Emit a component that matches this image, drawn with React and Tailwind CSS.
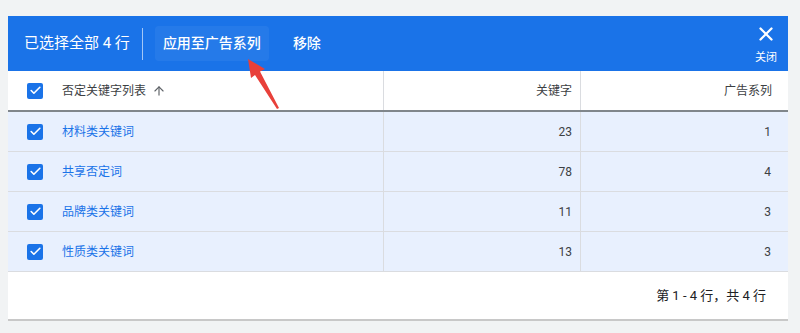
import { Check, X, ArrowUp } from "lucide-react";

const rows = [
  { name: "材料类关键词", keywords: 23, campaigns: 1 },
  { name: "共享否定词", keywords: 78, campaigns: 4 },
  { name: "品牌类关键词", keywords: 11, campaigns: 3 },
  { name: "性质类关键词", keywords: 13, campaigns: 3 },
];

const font = { fontFamily: 'Roboto, "Noto Sans CJK SC", sans-serif' };

function Box() {
  return (
    <div className="w-4 h-4 rounded-[2px] bg-[#1a73e8] flex items-center justify-center">
      <Check size={13} strokeWidth={3} className="text-white" />
    </div>
  );
}

export default function App() {
  return (
    <div className="w-[800px] h-[333px] bg-[#f1f3f4] pt-4 pl-2 relative" style={font}>
      <div className="w-[780px] bg-white shadow-[0_2px_0_#c8c8c8]">
        {/* selection bar */}
        <div className="h-[55px] bg-[#1a73e8] flex items-center pl-4 text-white">
          <span className="text-[15px]">已选择全部 4 行</span>
          <div className="w-px h-8 bg-white/60 ml-3 mr-3" />
          <div className="h-[35px] px-2 rounded bg-white/5 flex items-center text-[14px] font-medium">应用至广告系列</div>
          <div className="ml-[24px] text-[14px] font-medium">移除</div>
          <div className="ml-auto mr-[11px] flex flex-col items-center pt-[2px]">
            <X size={22} strokeWidth={2.5} />
            <span className="text-[11px] mt-[5px]">关闭</span>
          </div>
        </div>

        {/* header */}
        <div className="flex h-[41px] border-b-2 border-[#80868b] text-[12px] text-[#3c4043]">
          <div className="w-[376px] flex items-center pl-[19px] border-r border-[#dadce0]">
            <Box />
            <span className="ml-[19px]">否定关键字列表</span>
            <ArrowUp size={14} className="ml-[6px] text-[#5f6368]" />
          </div>
          <div className="w-[197px] flex items-center justify-end pr-2 border-r border-[#dadce0]">关键字</div>
          <div className="flex-1 flex items-center justify-end pr-4">广告系列</div>
        </div>

        {rows.map((r) => (
          <div key={r.name} className="flex h-10 bg-[#e8f0fe] border-b border-[#dadce0] text-[12px]">
            <div className="w-[376px] flex items-center pl-[19px] border-r border-[#dadce0]">
              <Box />
              <span className="ml-[19px] text-[#1a73e8]">{r.name}</span>
            </div>
            <div className="w-[197px] flex items-center justify-end pr-2 border-r border-[#dadce0] text-[#3c4043]">{r.keywords}</div>
            <div className="flex-1 flex items-center justify-end pr-[17px] text-[#3c4043]">{r.campaigns}</div>
          </div>
        ))}

        <div className="h-[47px] flex items-center justify-end pr-[22px] text-[13px] text-[#202124]">
          第 1 - 4 行，共 4 行
        </div>
      </div>

      <svg className="absolute left-0 top-0 pointer-events-none" width="800" height="333">
        <polygon points="248,59 265,69 260,71.5 279,108 277,109 255,75 251,78" fill="#e8403a" />
      </svg>
    </div>
  );
}
